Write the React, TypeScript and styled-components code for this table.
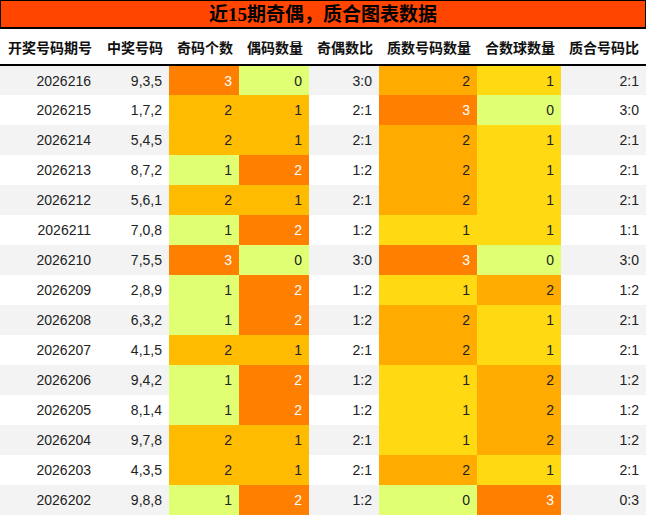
import React from "react";
import styled, { createGlobalStyle } from "styled-components";

const GlobalStyle = createGlobalStyle`
  html, body { margin: 0; padding: 0; background: #fff; }
  body { font-family: "Liberation Sans", "Noto Sans CJK SC", sans-serif; }
`;

const Wrap = styled.div`
  width: 646px;
`;

const Title = styled.div`
  box-sizing: border-box;
  height: 28px;
  border: 1px solid #000;
  background: #ff4500;
  color: #000;
  text-align: center;
  font-family: "Liberation Serif", "Noto Sans CJK SC", serif;
  font-weight: bold;
  font-size: 19px;
  line-height: 28px;
`;

const Table = styled.table`
  width: 646px;
  border-collapse: collapse;
  table-layout: fixed;
  border-top: 1px solid #000;
`;

const HeadCell = styled.th`
  height: 35px;
  padding: 0 0 0 8px;
  text-align: left;
  font-family: "Liberation Sans", "Noto Sans CJK SC", sans-serif;
  font-weight: bold;
  font-size: 14px;
  color: #111;
  border-bottom: 2px solid #000;
  white-space: nowrap;
`;

const Row = styled.tr<{ $alt: boolean }>`
  height: 30px;
  background: ${(p) => (p.$alt ? "#f3f3f3" : "#ffffff")};
`;

const Cell = styled.td<{ $bg?: string; $light?: boolean; $pad?: number }>`
  padding: 0 ${(p) => p.$pad ?? 7}px 0 0;
  text-align: right;
  font-size: 14px;
  color: ${(p) => (p.$light ? "#ffffff" : "#222")};
  background: ${(p) => p.$bg ?? "transparent"};
  white-space: nowrap;
`;

const GREEN = "#e1ff73";
const AMBER = "#ffbb00";
const DEEP = "#ffab00";
const YELLOW = "#ffda12";
const ORANGE = "#ff8000";

const oddColor = (v: number) => (v === 1 ? GREEN : v === 2 ? AMBER : ORANGE);
const evenColor = (v: number) => (v === 0 ? GREEN : v === 1 ? AMBER : ORANGE);
const fourColor = (v: number) =>
  v === 0 ? GREEN : v === 1 ? YELLOW : v === 2 ? DEEP : ORANGE;

const widths = [99, 70, 70, 70, 70, 98, 84, 85];
const heads = [
  "开奖号码期号",
  "中奖号码",
  "奇码个数",
  "偶码数量",
  "奇偶数比",
  "质数号码数量",
  "合数球数量",
  "质合号码比",
];

type R = [string, string, number, number, string, number, number, string];
const rows: R[] = [
  ["2026216", "9,3,5", 3, 0, "3:0", 2, 1, "2:1"],
  ["2026215", "1,7,2", 2, 1, "2:1", 3, 0, "3:0"],
  ["2026214", "5,4,5", 2, 1, "2:1", 2, 1, "2:1"],
  ["2026213", "8,7,2", 1, 2, "1:2", 2, 1, "2:1"],
  ["2026212", "5,6,1", 2, 1, "2:1", 2, 1, "2:1"],
  ["2026211", "7,0,8", 1, 2, "1:2", 1, 1, "1:1"],
  ["2026210", "7,5,5", 3, 0, "3:0", 3, 0, "3:0"],
  ["2026209", "2,8,9", 1, 2, "1:2", 1, 2, "1:2"],
  ["2026208", "6,3,2", 1, 2, "1:2", 2, 1, "2:1"],
  ["2026207", "4,1,5", 2, 1, "2:1", 2, 1, "2:1"],
  ["2026206", "9,4,2", 1, 2, "1:2", 1, 2, "1:2"],
  ["2026205", "8,1,4", 1, 2, "1:2", 1, 2, "1:2"],
  ["2026204", "9,7,8", 2, 1, "2:1", 1, 2, "1:2"],
  ["2026203", "4,3,5", 2, 1, "2:1", 2, 1, "2:1"],
  ["2026202", "9,8,8", 1, 2, "1:2", 0, 3, "0:3"],
];

function ColorCell({ value, color }: { value: number; color: string }) {
  return (
    <Cell $bg={color} $light={color === ORANGE}>
      {value}
    </Cell>
  );
}

export default function App() {
  return (
    <Wrap>
      <GlobalStyle />
      <Title>近15期奇偶，质合图表数据</Title>
      <Table>
        <colgroup>
          {widths.map((w, i) => (
            <col key={i} width={w} />
          ))}
        </colgroup>
        <thead>
          <tr>
            {heads.map((h) => (
              <HeadCell key={h}>{h}</HeadCell>
            ))}
          </tr>
        </thead>
        <tbody>
          {rows.map((r, i) => (
            <Row key={r[0]} $alt={i % 2 === 0}>
              <Cell $pad={8}>{r[0]}</Cell>
              <Cell>{r[1]}</Cell>
              <ColorCell value={r[2]} color={oddColor(r[2])} />
              <ColorCell value={r[3]} color={evenColor(r[3])} />
              <Cell>{r[4]}</Cell>
              <ColorCell value={r[5]} color={fourColor(r[5])} />
              <ColorCell value={r[6]} color={fourColor(r[6])} />
              <Cell>{r[7]}</Cell>
            </Row>
          ))}
        </tbody>
      </Table>
    </Wrap>
  );
}
